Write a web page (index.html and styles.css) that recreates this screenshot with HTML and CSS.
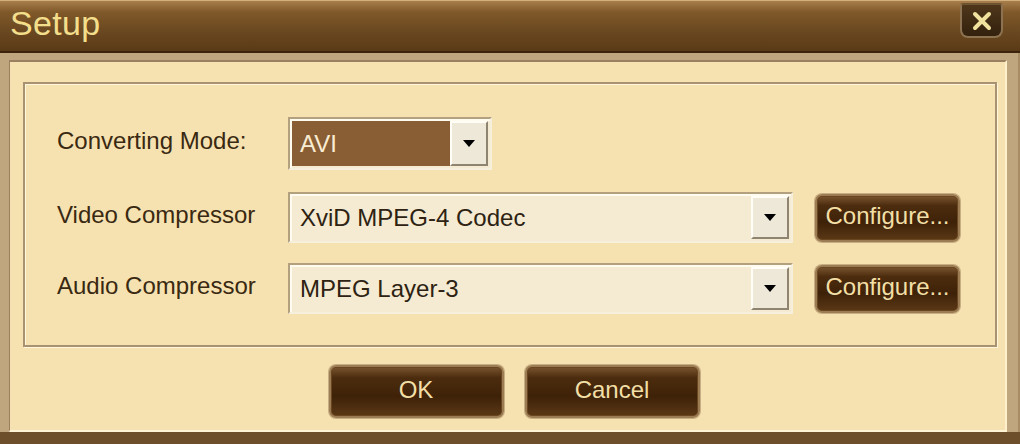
FILE: index.html
```html
<!DOCTYPE html>
<html lang="en">
<head>
  <meta charset="UTF-8" />
  <title>Setup</title>
  <link rel="stylesheet" href="styles.css">
</head>
<body>
  <div class="window">
    <div class="titlebar">
      <span class="title">Setup</span>
      <div class="close-btn">
        <svg viewBox="0 0 24 20" width="24" height="20">
          <path d="M5 3 L19 17 M19 3 L5 17" stroke="#f1e29e" stroke-width="4" stroke-linecap="round"/>
        </svg>
      </div>
    </div>

    <div class="frame">
      <div class="content">
        <div class="group">
          <div class="row row-first">
            <div class="label">Converting Mode:</div>
            <div class="combo combo-short combo-dark">
              <div class="combo-value">AVI</div>
              <div class="combo-arrow"><span class="tri"></span></div>
            </div>
          </div>

          <div class="row">
            <div class="label">Video Compressor</div>
            <div class="combo combo-wide">
              <div class="combo-value">XviD MPEG-4 Codec</div>
              <div class="combo-arrow"><span class="tri"></span></div>
            </div>
            <div class="brown-btn config-btn">Configure...</div>
          </div>

          <div class="row">
            <div class="label">Audio Compressor</div>
            <div class="combo combo-wide">
              <div class="combo-value">MPEG Layer-3</div>
              <div class="combo-arrow"><span class="tri"></span></div>
            </div>
            <div class="brown-btn config-btn">Configure...</div>
          </div>
        </div>

        <div class="actions">
          <div class="brown-btn action-btn">OK</div>
          <div class="brown-btn action-btn">Cancel</div>
        </div>
      </div>
    </div>
  </div>
</body>
</html>
```

FILE: styles.css
```css
body {
  margin: 0;
  padding: 0;
  background: #b89c74;
  font-family: 'Liberation Sans', Arial, sans-serif;
}

.window {
  width: 1020px;
  height: 444px;
  display: flex;
  flex-direction: column;
  overflow: hidden;
}

.titlebar {
  box-sizing: border-box;
  height: 53px;
  border-top: 1px solid #d2b07e;
  border-bottom: 2px solid #3c240c;
  background: linear-gradient(180deg, #a87e4c 0%, #80592a 22%, #6a4820 60%, #5a3a16 100%);
  display: flex;
  align-items: flex-start;
  justify-content: space-between;
  padding: 0 17px 0 10px;
}

.title {
  color: #f3de8c;
  font-size: 34px;
  line-height: 44px;
  letter-spacing: 0.3px;
}

.close-btn {
  width: 43px;
  height: 35px;
  margin-top: 2px;
  box-sizing: border-box;
  background: linear-gradient(180deg, #4e361a, #33210e);
  border: 2px solid #8c7250;
  border-top-color: #6e5330;
  border-radius: 3px 3px 8px 8px;
  display: flex;
  align-items: center;
  justify-content: center;
}

.frame {
  flex: 1;
  display: flex;
  background: #c0a67e;
  padding: 7px 13px 0 9px;
  border-bottom: 12px solid #6e4f2c;
  box-shadow: inset -2px 0 0 #a88c64;
}

.content {
  flex: 1;
  background: #f6e2b0;
  border-top: 2px solid #9a8060;
  border-left: 1px solid #9a8060;
  border-bottom: 2px solid #fff4d6;
  border-right: 2px solid #fff0cc;
  padding: 20px 8px 0 13px;
  display: flex;
  flex-direction: column;
}

.group {
  height: 265px;
  box-sizing: border-box;
  border: 2px solid #a89272;
  box-shadow: inset 1px 1px 0 #fff6dc, 1px 1px 0 #fff6dc;
  padding: 33px 0 0 32px;
  display: flex;
  flex-direction: column;
  gap: 20px;
}

.row {
  display: flex;
  align-items: center;
  height: 51px;
}

.row-first {
  height: 53px;
  margin-bottom: 2px;
}

.label {
  width: 231px;
  color: #3a2912;
  font-size: 24px;
  padding-bottom: 6px;
}

.combo {
  height: 51px;
  box-sizing: border-box;
  display: flex;
  border: 2px solid #b3a07e;
  border-right-color: #f6efdc;
  border-bottom-color: #f6efdc;
  box-shadow: inset 2px 2px 0 #fffbee;
  background: #f4ebd2;
  padding: 2px;
}

.combo-short {
  width: 204px;
  height: 53px;
}

.combo-wide {
  width: 505px;
}

.combo-dark .combo-value {
  background: #8a5e34;
  color: #f8ecd2;
}

.combo-value {
  flex: 1;
  color: #2e2212;
  font-size: 24px;
  display: flex;
  align-items: center;
  padding-left: 8px;
}

.combo-arrow {
  width: 38px;
  box-sizing: border-box;
  background: #eee8d8;
  border-left: 2px solid #fffdf6;
  border-top: 2px solid #fffdf6;
  border-right: 2px solid #8e8470;
  border-bottom: 2px solid #8e8470;
  display: flex;
  align-items: center;
  justify-content: center;
}

.tri {
  width: 0;
  height: 0;
  border-left: 6px solid transparent;
  border-right: 6px solid transparent;
  border-top: 7px solid #000;
}

.brown-btn {
  box-sizing: border-box;
  display: flex;
  align-items: center;
  justify-content: center;
  color: #f2dfa6;
  font-size: 24px;
  border: 2px solid #9c7c52;
  border-radius: 7px;
  background: linear-gradient(180deg, #7a5530 0%, #4c2c0e 22%, #3e2208 60%, #5a3816 100%);
  box-shadow: 0 0 0 1px #c8ae84, inset 0 0 0 1px #6a4620;
}

.config-btn {
  width: 145px;
  height: 48px;
  margin-left: 22px;
  padding-bottom: 4px;
}

.actions {
  display: flex;
  justify-content: center;
  gap: 21px;
  padding: 18px 0 0 8px;
}

.action-btn {
  width: 175px;
  height: 53px;
  padding-bottom: 4px;
}
```
